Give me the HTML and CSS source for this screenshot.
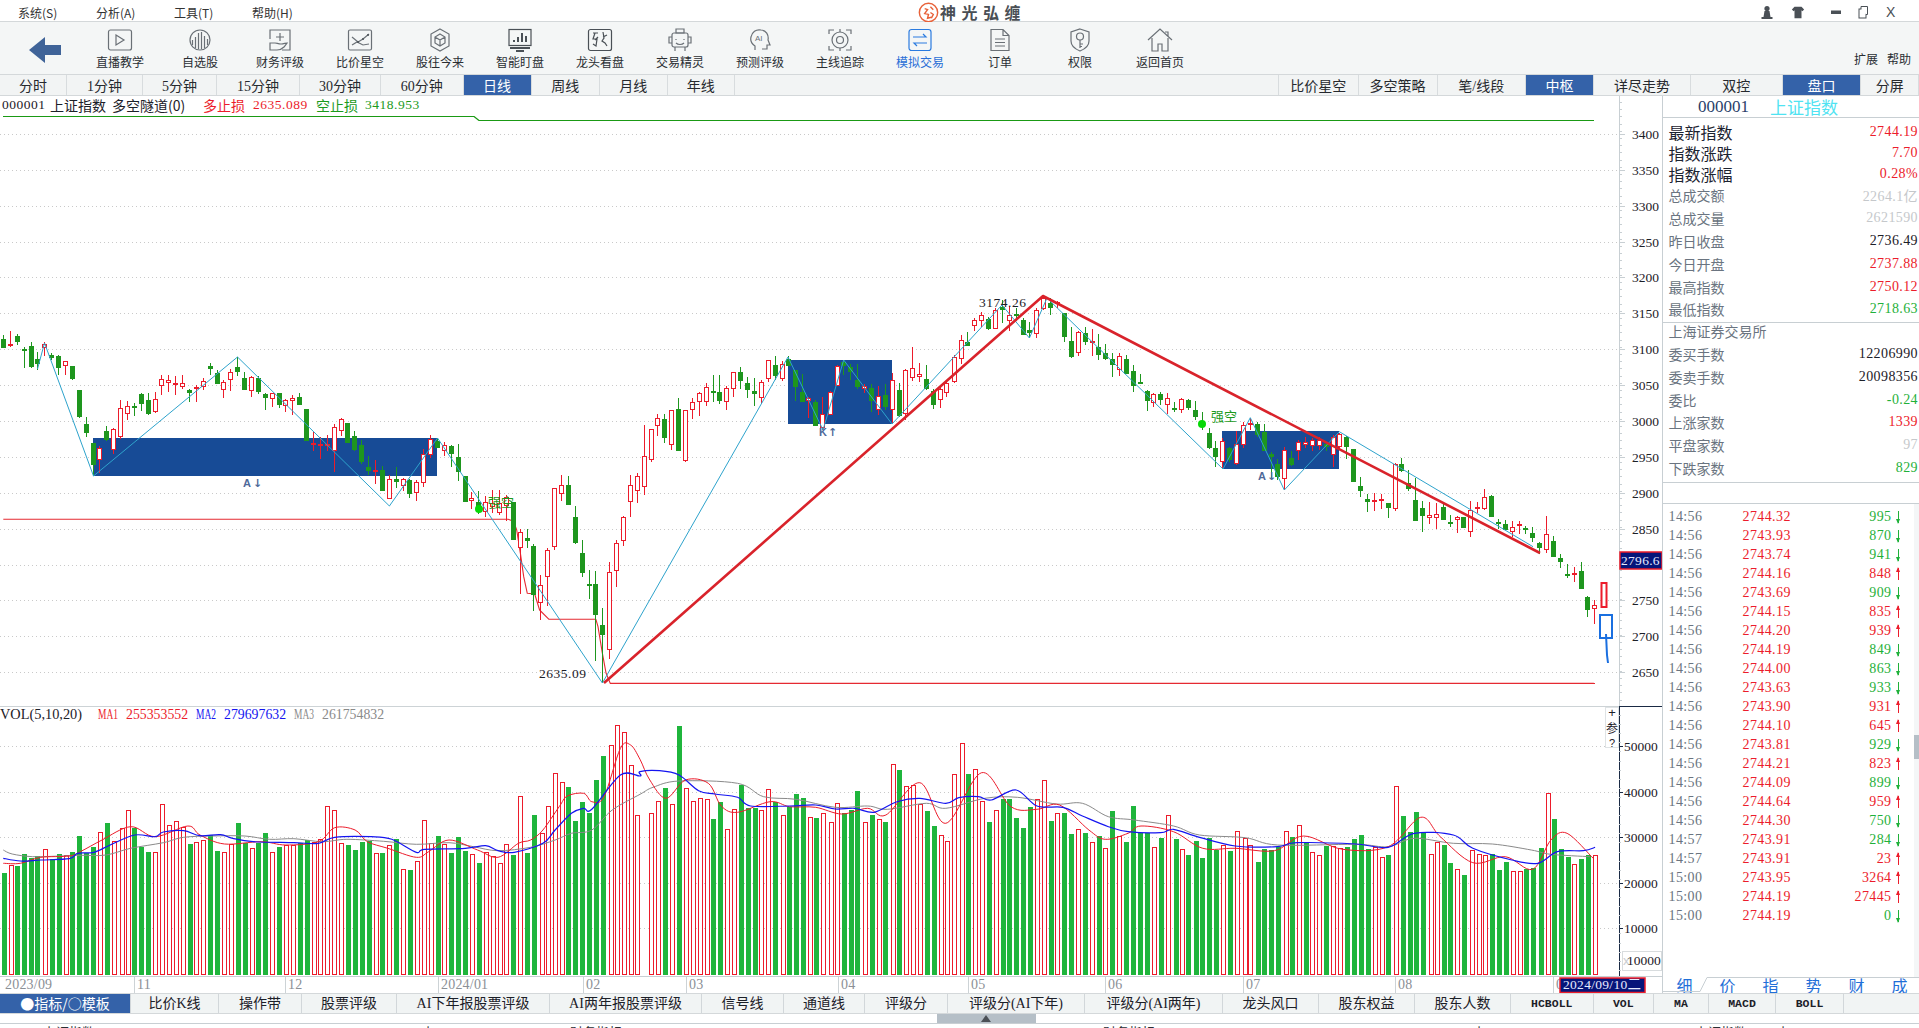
FILE: index.html
```html
<!DOCTYPE html>
<html lang="zh-CN">
<head>
<meta charset="utf-8">
<title>神光弘缠</title>
<link rel="stylesheet" href="styles.css">
</head>
<body>
<div class="app">
  <header class="titlebar">
    <nav class="menu"><span>系统(S)</span><span>分析(A)</span><span>工具(T)</span><span>帮助(H)</span></nav>
    <div class="brand">
      <svg class="logo" viewBox="0 0 22 22"><circle cx="11" cy="11" r="9.6"/><path d="M7 7l3 1-3 4 4 1-1 4 4-1M13 5l3 3M13 11l3 2-2 4"/></svg>
      <span>神光弘缠</span>
    </div>
    <div class="winbtns">
      <svg viewBox="0 0 14 14"><circle cx="7" cy="3.5" r="2.6" class="solid"/><path d="M4.5 6h5l1 6h2v2H1.500v-2h2z" class="solid"/></svg>
      <svg class="after-person" viewBox="0 0 16 14"><path d="M4 1h8l3 3-2 2-1-1v9H4V5L3 6 1 4z" class="solid"/></svg>
      <svg class="after-shirt" viewBox="0 0 14 14"><rect x="2" y="5.500" width="10" height="3.500" class="solid"/></svg>
      <svg class="after-min" viewBox="0 0 14 14"><rect x="3" y="4" width="7" height="9" class="thin"/><path d="M5 4V1.500h6.500v8H10" class="thin"/></svg>
      <span class="close">X</span>
    </div>
  </header>

  <section class="toolbar">
    <svg class="back" viewBox="0 0 32 26"><path d="M0 13 16 0v8h16v10H16v8z"/></svg>
    <ul class="tools">
      <li><svg class="ico" viewBox="0 0 26 24"><rect x="1.500" y="2" width="23" height="20" rx="2"/><path d="M9 7l8 5-8 5z"/></svg><span>直播教学</span></li>
      <li><svg class="ico" viewBox="0 0 26 24"><circle cx="13" cy="12" r="10"/><path d="M5.500 12v5M8.500 9v11M11.500 5v16M14.500 4v17M17.500 8v12M20.500 11v6"/></svg><span>自选股</span></li>
      <li><svg class="ico" viewBox="0 0 26 24"><path d="M3 11V2h20v20h-8M13 5v8M9 9h8"/><path d="M3 15h5c2 0 3 1 6 1s4-1 6-1l-3 4c-2 2-4 3-7 3H3z"/></svg><span>财务评级</span></li>
      <li><svg class="ico" viewBox="0 0 26 24"><rect x="1.500" y="2" width="23" height="20" rx="1.500"/><path d="M5 9l6 5 5-3 6-5M5 17l5-3 6 3 6-1"/><circle cx="11" cy="14" r="1" class="solid"/><circle cx="16" cy="11" r="1" class="solid"/><circle cx="21" cy="7" r="1" class="solid"/></svg><span>比价星空</span></li>
      <li><svg class="ico" viewBox="0 0 26 24"><path d="M13 1l9 5v12l-9 5-9-5V6z"/><path d="M13 6l5 3v6l-5 3-5-3V9zM8 9l5 3 5-3M13 12v6"/></svg><span>股往今来</span></li>
      <li><svg class="ico dark" viewBox="0 0 26 24"><rect x="2" y="1.500" width="22" height="16"/><path d="M7 14v-2M11 14V9M15 14V5M19 14V8M3 20h20M9 23h8" class="w2"/></svg><span>智能盯盘</span></li>
      <li><svg class="ico dark" viewBox="0 0 26 24"><rect x="1.500" y="1.500" width="23" height="21" rx="2"/><path d="M6 5h5M8 5l-2 6h4l-1 7-3-2M11 9l-3 3M16 4l1 6-2 3 3 2 2 3M20 7l-4 2"/></svg><span>龙头看盘</span></li>
      <li><svg class="ico" viewBox="0 0 26 24"><rect x="5" y="5" width="16" height="14" rx="2"/><path d="M9 1h8v4H9zM5 9H2v6h3M21 9h3v6h-3M9 11v1M17 11v1M9 15c2 2 6 2 8 0M8 19v4M18 19v4"/></svg><span>交易精灵</span></li>
      <li><svg class="ico" viewBox="0 0 26 24"><path d="M8 22v-4c-3-2-5-5-4-9 1-5 5-8 10-7 5 0 8 5 7 10l2 5h-3v4h-5"/><text x="8" y="13" class="ai">AI</text></svg><span>预测评级</span></li>
      <li><svg class="ico" viewBox="0 0 26 24"><path d="M2 6V2h5M19 2h5v4M2 18v4h5M19 22h5v-4M13 1v3M13 20v3"/><circle cx="13" cy="12" r="8"/><circle cx="13" cy="12" r="3.500"/></svg><span>主线追踪</span></li>
      <li class="on"><svg class="ico" viewBox="0 0 26 24"><rect x="2" y="1.500" width="22" height="21" rx="2.500"/><path d="M6 9h13l-3-3M20 15H7l3 3"/></svg><span>模拟交易</span></li>
      <li><svg class="ico" viewBox="0 0 26 24"><path d="M4 1.500h12l6 6v15H4zM16 1.500v6h6M8 11h10M8 14.500h10M8 18h10"/></svg><span>订单</span></li>
      <li><svg class="ico" viewBox="0 0 26 24"><path d="M13 1l9 3v9c0 5-4 8-9 10-5-2-9-5-9-10V4z"/><circle cx="13" cy="8.500" r="3.500"/><path d="M13 12v8M13 16h3M13 18.500h2"/></svg><span>权限</span></li>
      <li><svg class="ico" viewBox="0 0 26 24"><path d="M1 12L13 1l12 11M5 10v13h6v-7h4v7h6V10M18 4h3v4"/></svg><span>返回首页</span></li>
    </ul>
    <div class="toolbar-end"><span>扩展</span><span>帮助</span></div>
  </section>

  <section class="periods">
    <span>分时</span><span>1分钟</span><span>5分钟</span><span>15分钟</span><span>30分钟</span><span>60分钟</span><span class="on">日线</span><span>周线</span><span>月线</span><span>年线</span>
    <i></i>
    <span>比价星空</span><span>多空策略</span><span>笔/线段</span><span class="on">中枢</span><span>详尽走势</span><span>双控</span><span class="on">盘口</span><span>分屏</span>
  </section>

  <main class="main">
    <div class="chart-wrap">
      <svg id="chart" class="chart" viewBox="0 96 1662 897" width="1662" height="897">
        <g id="layer-grid"></g>
        <g class="zones">
          <rect x="93" y="438" width="344" height="38"/>
          <rect x="788" y="360" width="104" height="64"/>
          <rect x="1222" y="431" width="117" height="38"/>
        </g>
        <g id="layer-candles"></g>
        <g id="layer-lines"></g>

        <g class="lbl">
          <text x="979" y="307" class="n">3174.26</text>
          <text x="539" y="678" class="n">2635.09</text>
          <text x="1211" y="421" class="grn sm">强空</text>
          <text x="488" y="507" class="grn sm">强空</text>
        </g>
        <g class="mark">
          <text x="243" y="487">A</text><text x="253" y="487" class="dir">↓</text>
          <text x="819" y="436">K</text><text x="828" y="436" class="dir">↑</text>
          <text x="1258" y="480">A</text><text x="1267" y="480" class="dir">↓</text>
        </g>
        <g class="axis">
          <text x="1632" y="139">3400</text><text x="1632" y="175">3350</text><text x="1632" y="211">3300</text><text x="1632" y="247">3250</text>
          <text x="1632" y="282">3200</text><text x="1632" y="318">3150</text><text x="1632" y="354">3100</text><text x="1632" y="390">3050</text>
          <text x="1632" y="426">3000</text><text x="1632" y="462">2950</text><text x="1632" y="498">2900</text><text x="1632" y="534">2850</text>
          <text x="1632" y="605">2750</text><text x="1632" y="641">2700</text><text x="1632" y="677">2650</text>
          <text x="1624" y="751">50000</text><text x="1624" y="797">40000</text><text x="1624" y="842">30000</text><text x="1624" y="888">20000</text><text x="1624" y="933">10000</text>
        </g>
        <rect class="tag" x="1620" y="552" width="42" height="17"/>
        <text class="tagtext" x="1621" y="565">2796.6</text>

        <g class="hdr vol">
          <text x="0" y="719" textLength="82" lengthAdjust="spacingAndGlyphs">VOL(5,10,20)</text>
          <text x="98" y="719" class="red" textLength="20" lengthAdjust="spacingAndGlyphs">MA1</text><text x="126" y="719" class="d red">255353552</text>
          <text x="196" y="719" class="blu" textLength="20" lengthAdjust="spacingAndGlyphs">MA2</text><text x="224" y="719" class="d blu">279697632</text>
          <text x="294" y="719" class="gry" textLength="20" lengthAdjust="spacingAndGlyphs">MA3</text><text x="322" y="719" class="d gry">261754832</text>
        </g>
        <g class="pbtn">
          <rect x="1605.500" y="707.500" width="13" height="40"/>
          <text x="1612" y="717" class="latin">+</text><text x="1612" y="733">参</text><text x="1612" y="747" class="latin sm">?</text>
        </g>
        <rect class="unit" x="1622.500" y="951.500" width="39" height="19"/>
        <text class="unit-x" x="1623" y="965">x</text>
        <text class="axis-t" x="1627" y="965">10000</text>

        <g class="dates">
          <text x="5" y="989">2023/09</text><text x="137" y="989">11</text><text x="288" y="989">12</text><text x="441" y="989">2024/01</text>
          <text x="586" y="989">02</text><text x="689" y="989">03</text><text x="841" y="989">04</text><text x="971" y="989">05</text>
          <text x="1108" y="989">06</text><text x="1246" y="989">07</text><text x="1398" y="989">08</text><text x="1556" y="989">0</text>
        </g>
        <rect class="tag" x="1560" y="978" width="85" height="14.500"/>
        <text class="tagtext" x="1563" y="989">2024/09/10二</text>
      </svg>
      <div class="chart-head">
        <span class="num">000001</span>
        <span>上证指数</span>
        <span>多空隧道(0)</span>
        <span class="red">多止损</span>
        <span class="num red">2635.089</span>
        <span class="dgrn">空止损</span>
        <span class="num dgrn">3418.953</span>
      </div>
    </div>

    <aside class="side">
      <div class="side-head"><span class="code">000001</span><span class="name">上证指数</span></div>
      <div class="quote quote-a">
        <div class="kv big"><b>最新指数</b><em class="red">2744.19</em></div>
        <div class="kv big"><b>指数涨跌</b><em class="red">7.70</em></div>
        <div class="kv big"><b>指数涨幅</b><em class="red">0.28%</em></div>
        <div class="kv"><b>总成交额</b><em class="pale">2264.1亿</em></div>
        <div class="kv"><b>总成交量</b><em class="pale">2621590</em></div>
        <div class="kv"><b>昨日收盘</b><em>2736.49</em></div>
        <div class="kv"><b>今日开盘</b><em class="red">2737.88</em></div>
        <div class="kv"><b>最高指数</b><em class="red">2750.12</em></div>
        <div class="kv"><b>最低指数</b><em class="grn">2718.63</em></div>
      </div>
      <div class="quote quote-b">
        <div class="kv"><b>上海证券交易所</b></div>
        <div class="kv"><b>委买手数</b><em>12206990</em></div>
        <div class="kv"><b>委卖手数</b><em>20098356</em></div>
        <div class="kv"><b>委比</b><em class="grn">-0.24</em></div>
        <div class="kv"><b>上涨家数</b><em class="red">1339</em></div>
        <div class="kv"><b>平盘家数</b><em class="pale">97</em></div>
        <div class="kv"><b>下跌家数</b><em class="grn">829</em></div>
      </div>
      <div class="side-gap"></div>
      <div class="ticks">
        <div class="tick"><span>14:56</span><span class="red">2744.32</span><span class="grn">995</span><i class="arr dn"></i></div>
        <div class="tick"><span>14:56</span><span class="red">2743.93</span><span class="grn">870</span><i class="arr dn"></i></div>
        <div class="tick"><span>14:56</span><span class="red">2743.74</span><span class="grn">941</span><i class="arr dn"></i></div>
        <div class="tick"><span>14:56</span><span class="red">2744.16</span><span class="red">848</span><i class="arr up"></i></div>
        <div class="tick"><span>14:56</span><span class="red">2743.69</span><span class="grn">909</span><i class="arr dn"></i></div>
        <div class="tick"><span>14:56</span><span class="red">2744.15</span><span class="red">835</span><i class="arr up"></i></div>
        <div class="tick"><span>14:56</span><span class="red">2744.20</span><span class="red">939</span><i class="arr up"></i></div>
        <div class="tick"><span>14:56</span><span class="red">2744.19</span><span class="grn">849</span><i class="arr dn"></i></div>
        <div class="tick"><span>14:56</span><span class="red">2744.00</span><span class="grn">863</span><i class="arr dn"></i></div>
        <div class="tick"><span>14:56</span><span class="red">2743.63</span><span class="grn">933</span><i class="arr dn"></i></div>
        <div class="tick"><span>14:56</span><span class="red">2743.90</span><span class="red">931</span><i class="arr up"></i></div>
        <div class="tick"><span>14:56</span><span class="red">2744.10</span><span class="red">645</span><i class="arr up"></i></div>
        <div class="tick"><span>14:56</span><span class="red">2743.81</span><span class="grn">929</span><i class="arr dn"></i></div>
        <div class="tick"><span>14:56</span><span class="red">2744.21</span><span class="red">823</span><i class="arr up"></i></div>
        <div class="tick"><span>14:56</span><span class="red">2744.09</span><span class="grn">899</span><i class="arr dn"></i></div>
        <div class="tick"><span>14:56</span><span class="red">2744.64</span><span class="red">959</span><i class="arr up"></i></div>
        <div class="tick"><span>14:56</span><span class="red">2744.30</span><span class="grn">750</span><i class="arr dn"></i></div>
        <div class="tick"><span>14:57</span><span class="red">2743.91</span><span class="grn">284</span><i class="arr dn"></i></div>
        <div class="tick"><span>14:57</span><span class="red">2743.91</span><span class="red">23</span><i class="arr up"></i></div>
        <div class="tick"><span>15:00</span><span class="red">2743.95</span><span class="red">3264</span><i class="arr up"></i></div>
        <div class="tick"><span>15:00</span><span class="red">2744.19</span><span class="red">27445</span><i class="arr up"></i></div>
        <div class="tick"><span>15:00</span><span class="red">2744.19</span><span class="grn">0</span><i class="arr dn"></i></div>
        <div class="vscroll"><i></i></div>
      </div>
      <div class="minitabs">
        <svg class="minitabs-line" viewBox="0 0 257 16"><path d="M0 14.500h37l7-14h213"/></svg>
        <span>细</span><span>价</span><span>指</span><span>势</span><span>财</span><span>成</span>
      </div>
    </aside>
  </main>

  <section class="subtabs">
    <span class="on cjk">●指标/○模板</span><span>比价K线</span><span>操作带</span><span>股票评级</span><span>AI下年报股票评级</span><span>AI两年报股票评级</span><span>信号线</span><span>通道线</span><span>评级分</span><span>评级分(AI下年)</span><span>评级分(AI两年)</span><span>龙头风口</span><span>股东权益</span><span>股东人数</span><span class="mono">HCBOLL</span><span class="mono">VOL</span><span class="mono">MA</span><span class="mono">MACD</span><span class="mono">BOLL</span><i></i>
  </section>
  <div class="hscroll"><div class="hthumb"><i></i></div></div>
  <div class="cutoff"><span>上证指数</span><span>上</span><span>财务指标</span><span>财务指标</span><span>上</span><span>上证指数</span><span>上</span></div>
</div>
<script src="chart.js"></script>
</body>
</html>
```
FILE: styles.css
```css
* { box-sizing: border-box; }
html, body { margin: 0; padding: 0; }
body {
  width: 1919px; height: 1028px; overflow: hidden; background: #fff; color: #1c2028;
  font-family: "Liberation Serif", "Noto Sans CJK SC", serif; font-size: 13px;
}
.app { display: flex; flex-direction: column; height: 1028px; }
.red { color: #ec1c2b; fill: #ec1c2b; }
.grn { color: #1fb13a; fill: #1c9a1c; }
.dgrn { color: #1c9a1c; }
.blu { fill: #1414f0; }
.gry { fill: #8a8a8a; }
.pale { color: #c5c8cb; }

/* title bar */
.titlebar { height: 22px; flex: none; display: grid; grid-template-columns: 1fr auto 1fr; align-items: center; border-bottom: 1px solid #d4d8da; }
.menu { display: flex; padding-left: 18px; gap: 39px; font-family: "Noto Sans CJK SC", sans-serif; font-size: 12px; color: #333; }
.menu span { width: 39px; white-space: nowrap; }
.brand { display: flex; align-items: center; gap: 1px; padding-left: 25px; font-family: "Noto Sans CJK SC", sans-serif; font-size: 16px; font-weight: 700; color: #4a4f55; letter-spacing: 5.500px; }
.logo { width: 21px; height: 21px; fill: none; stroke: #e8623a; stroke-width: 1.500; }
.winbtns { display: flex; justify-content: flex-end; align-items: center; padding-right: 23px; color: #4a4f55; }
.winbtns svg { width: 14px; height: 14px; }
.winbtns .after-person { margin-left: 17px; }
.winbtns .after-shirt { margin-left: 24px; }
.winbtns .after-min { margin-left: 13px; }
.solid { fill: #4a5056; stroke: none; }
.thin { fill: #fff; stroke: #4a5056; stroke-width: 1; }
.close { font-family: "Liberation Sans", sans-serif; font-size: 14px; width: 10px; margin-left: 16px; }

/* toolbar */
.toolbar { height: 53px; flex: none; display: flex; background: #f4f6f6; border-bottom: 1px solid #d4d8da; position: relative; }
.back { position: absolute; left: 29px; top: 15px; width: 32px; height: 26px; fill: #3f6398; }
.tools { list-style: none; margin: 0; padding: 0 0 0 80px; display: flex; }
.tools li { width: 80px; display: flex; flex-direction: column; align-items: center; padding-top: 6px; font-family: "Noto Sans CJK SC", sans-serif; font-size: 12px; color: #2a2e33; line-height: 16px; }
.tools li span { margin-top: 2px; }
.ico { width: 26px; height: 24px; fill: none; stroke: #6a7076; stroke-width: 1.200; }
.ico.dark { stroke: #4a5056; }
.ico .w2 { stroke-width: 2; }
.ico .ai { font-family: "Liberation Sans", sans-serif; font-size: 8px; fill: #6a7076; stroke: none; }
.tools li.on { color: #2a6fd6; }
.tools li.on .ico { stroke: #2a7be0; }
.toolbar-end { position: absolute; right: 8px; bottom: 7px; display: flex; gap: 9px; font-family: "Noto Sans CJK SC", sans-serif; font-size: 12px; line-height: 16px; color: #2a2e33; }

/* period tabs */
.periods { height: 21px; flex: none; display: grid; grid-template-columns: 67px 76px 74px 83px 81px 82.500px 68px 68.500px 67.500px 67.500px 544px 79.500px 79px 88.500px 68px 97px 91.600px 78.900px 57.500px; background: #f2f4f4; border-bottom: 1px solid #d4d8da; font-family: "Liberation Serif", "Noto Sans CJK SC", sans-serif; font-size: 14px; color: #26292e; }
.periods span { display: flex; align-items: center; justify-content: center; border-right: 1px solid #d8dcde; white-space: nowrap; }
.periods i:first-of-type { border-right: 1px solid #d8dcde; }
.periods .on { background: #3462a9; color: #fff; }

/* chart and side panel */
.main { height: 897px; flex: none; display: flex; }
.chart-wrap { position: relative; width: 1662px; flex: none; }
.chart { display: block; overflow: hidden; }
.chart-head { position: absolute; left: 2px; top: 0; display: grid; grid-template-columns: 48px 62px 91px 50px 63px 49px auto; height: 18px; font-family: "Noto Sans CJK SC", sans-serif; font-size: 14px; line-height: 18px; color: #1c2028; white-space: nowrap; }
.chart-head .num { font-family: "Liberation Serif", serif; font-size: 13.500px; letter-spacing: .5px; }
.zones rect { fill: #174b96; }
.lbl text { font-family: "Noto Sans CJK SC", sans-serif; font-size: 14px; fill: #1c2028; }
.lbl text.grn { fill: #1c9a1c; }
.chart text.n { font-family: "Liberation Serif", serif; font-size: 13.500px; letter-spacing: .5px; }
.lbl text.sm { font-size: 13px; }
.hdr text { font-family: "Liberation Serif", serif; font-size: 13.800px; fill: #1c2028; }
.hdr text.red { fill: #ec1c2b; }
.hdr text.blu { fill: #1414f0; }
.hdr text.gry { fill: #8a8a8a; }
.mark text { font-family: "Liberation Sans", sans-serif; font-size: 11px; font-weight: 700; fill: #4f6a9a; }
.mark text.dir { font-family: "DejaVu Sans", sans-serif; font-size: 11px; }
.axis text, .axis-t { font-family: "Liberation Serif", serif; font-size: 13.500px; fill: #1c2028; }
.tag { fill: #06157a; stroke: #ec1c2b; stroke-width: 1.500; }
.tagtext { font-family: "Liberation Serif", "Noto Sans CJK SC", serif; font-size: 13.500px; fill: #e6eaff; letter-spacing: .3px; }
.pbtn rect { fill: #fff; stroke: #dfe3e5; }
.pbtn text { font-family: "Noto Sans CJK SC", sans-serif; font-size: 12px; text-anchor: middle; fill: #1c2028; }
.pbtn text.latin { font-family: "Liberation Sans", sans-serif; font-size: 13px; }
.pbtn text.latin.sm { font-size: 11px; }
.unit { fill: #fff; stroke: #d8dcde; }
.unit-x { font-family: "Liberation Sans", sans-serif; font-size: 13px; fill: #c8ccd0; }
.dates text { font-family: "Liberation Serif", serif; font-size: 14px; fill: #8b9096; letter-spacing: .2px; }

.side { width: 257px; flex: none; display: flex; flex-direction: column; border-left: 1px solid #c8cfd3; }
.side-head { height: 22px; flex: none; display: flex; align-items: center; padding-left: 35px; border-bottom: 1px solid #c8cfd3; }
.code { font-size: 17px; color: #2a3f6a; font-family: "Liberation Serif", serif; }
.name { margin-left: 21px; font-family: "Noto Sans CJK SC", sans-serif; font-size: 17px; color: #4fe3f2; line-height: 20px; }
.quote { flex: none; border-bottom: 1px solid #c8cfd3; }
.quote-a { padding: 3px 0 1px; }
.quote-b { margin-top: -3px; padding-bottom: 3px; border-top: 0; position: relative; }
.kv { height: 22.800px; display: flex; justify-content: space-between; align-items: center; padding: 0 1px 0 5.500px; }
.kv b { font: 400 14px "Noto Sans CJK SC", sans-serif; color: #6a7480; }
.kv em { font: 400 14px "Liberation Serif", "Noto Sans CJK SC", serif; letter-spacing: .4px; }
.kv.big { height: 21px; }
.kv.big b { font-size: 16px; color: #1c2330; }
.side-gap { height: 21px; flex: none; border-bottom: 1px solid #c8cfd3; }
.ticks { flex: 1; padding-top: 3px; position: relative; }
.tick { height: 19px; display: grid; grid-template-columns: 74px 70px 79px 14px; padding-left: 5.500px; align-items: center; font-size: 14px; letter-spacing: .4px; line-height: 19px; }
.tick span:first-child { color: #6a7480; }
.tick span:nth-child(3) { text-align: right; }
.arr { position: relative; height: 14px; display: block; }
.arr::before { content: ""; position: absolute; left: 6px; top: 1px; bottom: 1px; width: 1.500px; background: currentColor; }
.arr::after { content: ""; position: absolute; left: 4.250px; border-left: 2.500px solid transparent; border-right: 2.500px solid transparent; }
.arr.up { color: #ec1c2b; }
.arr.up::after { top: 0; border-bottom: 5px solid currentColor; }
.arr.dn { color: #1fb13a; }
.arr.dn::after { bottom: 0; border-top: 5px solid currentColor; }
.vscroll { position: absolute; right: 0; top: 0; bottom: 0; width: 5px; background: #f4f6f7; }
.vscroll i { position: absolute; left: 0; right: 0; top: 231px; height: 24px; background: #b5bfc7; }
.minitabs { height: 16px; flex: none; position: relative; display: grid; grid-template-columns: repeat(6, 43px); font-family: "Noto Sans CJK SC", sans-serif; font-size: 16px; line-height: 17px; color: #1f6fd8; text-align: center; }
.minitabs-line { position: absolute; inset: 0; width: 257px; height: 16px; fill: none; stroke: #c8cfd3; }

/* bottom */
.subtabs { height: 21px; flex: none; position: relative; display: grid; grid-template-columns: 131px 88px 83px 95px 153px 152px 82px 81px 83px 137px 138px 96px 96px 96px 82.500px 60.500px 55px 67px 68px 75px; background: #f1f4f4; border-top: 1px solid #d4d8da; border-bottom: 1px solid #d4d8da; font-family: "Liberation Serif", "Noto Sans CJK SC", serif; font-size: 14px; line-height: 19px; text-align: center; color: #1c2028; }
.subtabs span { border-right: 1px solid #d2d7da; white-space: nowrap; }
.subtabs .on { background: #3462a9; color: #fff; }
.subtabs .cjk { font-family: "Noto Sans CJK SC", sans-serif; }
.subtabs .mono { font-family: "Liberation Mono", monospace; font-size: 11.500px; font-weight: 700; }
.hscroll { height: 9px; flex: none; background: #fff; position: relative; }
.hthumb { position: absolute; left: 937px; width: 99px; top: 0; bottom: 0; background: #b5bfc7; }
.hthumb i { position: absolute; left: 44px; top: 1px; border-left: 5px solid transparent; border-right: 5px solid transparent; border-bottom: 7px solid #4a5056; }
.cutoff { flex: 1; border-top: 1px solid #c8cfd3; overflow: hidden; display: grid; grid-template-columns: 43px 379px 148px 533px 370px 222px 82px 142px; font-family: "Noto Sans CJK SC", sans-serif; font-size: 13px; line-height: 13px; padding-top: 1px; color: #2a2e33; }
.cutoff span { grid-row: 1; white-space: nowrap; }
.cutoff span:nth-child(1) { grid-column: 2; }
.cutoff span:nth-child(2) { grid-column: 3; }
.cutoff span:nth-child(3) { grid-column: 4; }
.cutoff span:nth-child(4) { grid-column: 5; }
.cutoff span:nth-child(5) { grid-column: 6; }
.cutoff span:nth-child(6) { grid-column: 7; }
.cutoff span:nth-child(7) { grid-column: 8; }
```
FILE: chart.js
```js
(function () {
  var NS = 'http://www.w3.org/2000/svg';
  var RED = '#ec1c2b', CGRN = '#1e961e', VGRN = '#1fb53c', GRID = '#c9c9c9', AXIS = '#c8cfd3', DARK = '#1a2a44';
  var gridLayer = document.getElementById('layer-grid');
  var candleLayer = document.getElementById('layer-candles');
  var lineLayer = document.getElementById('layer-lines');

  function el(parent, name, attrs) {
    var n = document.createElementNS(NS, name);
    for (var k in attrs) n.setAttribute(k, attrs[k]);
    parent.appendChild(n);
    return n;
  }
  function hline(p, x1, x2, y, color, extra) {
    var a = { x1: x1, x2: x2, y1: y + 0.5, y2: y + 0.5, stroke: color };
    for (var k in extra) a[k] = extra[k];
    return el(p, 'line', a);
  }
  function vline(p, x, y1, y2, color) {
    return el(p, 'line', { x1: x + 0.5, x2: x + 0.5, y1: y1, y2: y2, stroke: color });
  }
  function poly(p, pts, color, width) {
    return el(p, 'polyline', { points: pts, fill: 'none', stroke: color, 'stroke-width': width, 'stroke-linejoin': 'round' });
  }
  function fromCrop(ox, sx, oy, list) {
    return list.map(function (q) { return [ox + q[0] / sx, oy + q[1] / 3]; });
  }
  function str(pts) { return pts.map(function (q) { return q[0].toFixed(1) + ',' + q[1].toFixed(1); }).join(' '); }
  /* Catmull-Rom curve through the points, as the moving averages are drawn */
  function smooth(pts) {
    var d = 'M' + pts[0][0].toFixed(1) + ' ' + pts[0][1].toFixed(1);
    for (var i = 0; i < pts.length - 1; i++) {
      var a = pts[Math.max(i - 1, 0)], b = pts[i], c = pts[i + 1], e = pts[Math.min(i + 2, pts.length - 1)];
      d += 'C' + (b[0] + (c[0] - a[0]) / 6).toFixed(1) + ' ' + (b[1] + (c[1] - a[1]) / 6).toFixed(1) + ' ' +
        (c[0] - (e[0] - b[0]) / 6).toFixed(1) + ' ' + (c[1] - (e[1] - b[1]) / 6).toFixed(1) + ' ' +
        c[0].toFixed(1) + ' ' + c[1].toFixed(1);
    }
    return d;
  }

  /* ---------- grid and axes ---------- */
  var priceY = [134, 170, 206, 242, 277, 313, 349, 385, 421, 457, 493, 529, 565, 600, 636, 672];
  priceY.forEach(function (y) {
    hline(gridLayer, 0, 1619, y, GRID, { 'stroke-dasharray': '1 3' });
    hline(gridLayer, 1619, 1625, y, AXIS);
  });
  for (var ty = 102; ty < 704; ty += 7.2) hline(gridLayer, 1619, 1622, Math.round(ty), AXIS);
  vline(gridLayer, 1619, 96, 706, AXIS);
  hline(gridLayer, 0, 1619, 706, '#cdd3d6');
  hline(gridLayer, 1619, 1662, 706, DARK);
  vline(gridLayer, 1619, 706, 977, DARK);
  [746, 792, 837, 883, 928].forEach(function (y) {
    hline(gridLayer, 0, 1619, y, GRID, { 'stroke-dasharray': '1 3' });
    hline(gridLayer, 1619, 1623, y, DARK);
  });
  for (var vy = 715; vy < 975; vy += 9.1) hline(gridLayer, 1619, 1621, Math.round(vy), AXIS);
  hline(gridLayer, 0, 1662, 976, '#c8cfd3');
  [134, 285, 438, 583, 686, 838, 968, 1105, 1243, 1395, 1553].forEach(function (x) { vline(gridLayer, x, 977, 993, '#cdd3d6'); });

  /* top boundary line of the channel */
  poly(gridLayer, '3,116.500 474,116.500 479,120.500 1594,120.500', '#1a9a14', 1.200);
  /* stop lines */
  poly(gridLayer, str(fromCrop(0, 2.45, 320, [[8, 598], [1245, 598], [1258, 604], [1266, 630], [1275, 700], [1283, 770], [1292, 820], [1310, 822], [1322, 870], [1345, 898], [1460, 898], [1465, 920], [1476, 1000], [1485, 1060], [1495, 1090], [3905, 1090]])), '#e52a32', 1.100);

  /* ---------- candles: x colour top bottom high low, read per chart section ---------- */
  var candleSections = [
    { ox: 0, sx: 2.45, oy: 320, rows: '8g57,84,45,84 25r72,78,33,82 42g47,65,42,75 59g88,92,82,145 77g78,141,66,145 92g117,132,96,150 109r73,84,66,108 126g106,115,100,120 143g108,143,105,165 160r124,137,124,165 177g138,177,138,180 195g210,291,210,294 212g312,339,291,351 229g369,435,369,468 243r384,421,378,460 261g333,360,318,362 278r327,389,323,402 295r265,351,240,358 312r259,282,243,300 329g258,262,250,288 347g222,252,218,273 364g240,282,218,284 381r238,276,216,279 395r178,199,165,225 412r181,188,165,217 430r189,191,168,225 447r190,201,165,207 464g210,219,207,246 481r202,205,195,246 498r184,201,175,210 516g138,147,129,165 533g159,192,150,193 547r186,209,180,234 565r156,179,147,213 582g141,156,111,168 599g174,210,156,210 616r171,213,168,231 633g174,216,168,222 650g222,234,219,270 667r220,238,219,261 685g220,255,219,264 699r241,258,237,276 716r235,243,225,285 733g231,255,219,255 750g267,362,267,363 767r370,375,336,393 785r373,376,350,417 802r371,375,345,393 819r322,394,312,456 836r297,333,294,348 851g309,369,309,369 868g348,390,333,393 885g375,426,361,432 903g441,453,408,465 920r450,455,420,492 937g450,513,438,513 954r478,537,465,537 971g477,486,441,504 988r478,497,474,513 1003g480,522,477,534 1020r487,518,480,543 1037r403,489,387,501 1055r358,406,345,414 1072g363,384,354,384 1089r376,394,366,408 1106g378,402,375,441 1123g411,456,372,483 1140g468,546,468,546 1155r535,543,516,567 1172g546,576,513,582 1189r546,576,528,590 1206r549,560,510,580 1223r550,578,510,585 1240r531,557,525,603 1258g546,660,546,660 1275r637,683,628,822 1292g654,663,627,684 1307g678,826,672,873 1324r796,849,765,900 1341r690,771,684,858 1358r504,681,504,690 1375r495,521,465,543 1392g495,555,468,555 1409g591,669,558,672 1427g699,759,660,771 1444g792,797,750,837 1459g792,885,753,1023 1476g915,945,864,1090 1493r756,990,726,1017 1510r670,753,660,801 1527r591,663,588,678 1544r496,546,465,591 1562r468,513,459,549' },
    { ox: 600, sx: 2.45, oy: 280, rows: '109r528,622,435,645 126r448,540,448,545 141r415,437,402,468 158g417,473,402,490 175r391,494,391,510 192g387,513,354,513 209r391,543,391,545 226r367,391,354,417 243r340,365,336,408 261r322,365,308,378 278g333,336,285,366 293g336,363,285,372 310r325,365,318,390 327r277,328,275,351 344g277,302,262,327 361g309,330,292,354 378g333,342,294,378 395r307,353,300,372 412r241,298,240,306 429g255,288,228,300 446r253,296,243,303 461g237,258,228,258 478g270,321,270,363 495g336,366,282,366 512r355,363,350,414 529g366,438,360,438 546r402,444,351,450 565r335,405,333,405 582r257,317,254,318 597g245,258,240,285 613g262,275,252,300 631g300,321,252,327 647r319,326,312,340 664g324,364,312,396 682r349,391,318,405 699g345,381,312,391 716r301,391,280,432 733g330,409,309,411 748r271,403,268,420 765r265,294,201,303 782r283,292,249,306 799g297,327,255,330 816g333,375,327,387 833r327,360,318,385 850r310,340,306,351 868r232,305,225,309 885r181,236,165,252 900g186,197,156,197 917r120,137,114,153 934r106,122,96,141 951g117,147,111,150 969r91,146,84,147 986g81,90,60,129 1003r106,122,78,153 1020g102,108,84,123 1037g120,165,114,165 1052g150,159,126,174 1069r91,161,84,174 1086r54,87,45,90 1103g69,84,54,105 1120r67,72,63,84 1137g99,171,99,186 1155g183,231,141,234 1172r157,218,153,228 1189g159,186,141,195 1206r184,189,148,228 1221g201,225,162,240 1238g219,237,192,240 1255g237,255,219,291 1272r229,269,219,288 1289g237,282,225,282 1306g273,318,255,336 1324g306,312,282,312 1341g333,363,330,393 1356r343,369,340,381 1373g342,360,336,375 1390r355,376,340,402 1407g384,390,366,396 1424r357,390,354,399 1441g360,385,357,390 1458g390,411,363,420' },
    { ox: 1180, sx: 3, oy: 380, rows: '66g126,136,96,150 88g159,205,144,208 106g205,231,183,260 127r184,245,174,264 148g205,240,200,245 169r193,251,153,255 190r136,196,126,205 211r130,136,114,150 232g133,165,126,170 253g156,213,132,213 274g223,232,216,297 292g253,291,237,300 313r211,296,202,330 334g235,256,213,258 355r187,214,180,240 376r187,195,171,204 397r181,199,174,213 418r180,199,172,210 439g192,202,185,213 460r172,226,165,262 478r163,200,158,205 499g171,201,168,237 520g207,306,207,306 541g318,333,291,351 562g357,366,342,396 583r359,367,339,393 604r356,360,342,387 625g369,384,369,414 646r253,386,250,393 665g252,273,234,276 686g309,327,270,333 707g360,423,294,423 728g384,408,363,456 748r404,415,366,432 769r403,413,369,447 790g381,420,366,420 811g426,430,405,441 832r410,421,408,459 850g411,444,411,444 871r389,457,363,471 892r382,386,366,399 913r352,386,327,390 934g348,411,345,411 955g426,431,417,447 976g433,450,420,450 997r440,456,423,471 1018r432,436,423,462 1037g444,450,438,462 1057g460,474,441,486 1078g489,504,486,522 1099r463,510,408,519 1120g483,531,468,531 1141g534,546,522,564 1162g582,588,552,594 1183r579,584,561,606 1204g573,627,546,627 1222g651,690,648,711 1243r676,686,660,732' }
  ];
  candleSections.forEach(function (sec) {
    sec.rows.split(' ').forEach(function (row) {
      var m = row.match(/^(\d+)([rg])(\d+),(\d+),(\d+),(\d+)$/);
      var cx = Math.round(sec.ox + (+m[1]) / sec.sx - 0.5);
      var t = Math.round(sec.oy + (+m[3]) / 3), b = Math.round(sec.oy + (+m[4]) / 3);
      var h = Math.round(sec.oy + (+m[5]) / 3), l = Math.round(sec.oy + (+m[6]) / 3);
      var up = m[2] === 'r', col = up ? RED : CGRN;
      if (b - t < 2) b = t + 2;
      vline(candleLayer, cx, h, l, col);
      if (up && b - t >= 3) {
        el(candleLayer, 'rect', { x: cx - 1.5, y: t + 0.5, width: 4, height: b - t - 1, fill: '#fff', stroke: col });
      } else {
        el(candleLayer, 'rect', { x: cx - 2, y: t, width: 5, height: b - t, fill: col });
      }
    });
  });
  /* forecast boxes at the right */
  el(candleLayer, 'rect', { x: 1601.5, y: 583, width: 5, height: 24, fill: '#fff', stroke: RED, 'stroke-width': 2 });
  el(candleLayer, 'rect', { x: 1600, y: 615, width: 12, height: 23, fill: '#fff', stroke: '#1a6fe0', 'stroke-width': 2 });
  poly(candleLayer, '1606,634 1607,655 1608,663', '#1a6fe0', 2);
  /* signal dots */
  el(candleLayer, 'circle', { cx: 479, cy: 509, r: 4, fill: '#06d806' });
  el(candleLayer, 'circle', { cx: 1202, cy: 424, r: 4, fill: '#06d806' });

  /* ---------- strokes over the candles ---------- */
  poly(lineLayer, '37.500,369 44.500,343 93.500,476 237.500,357 389.400,506 437.500,438 602.400,683 788,357 823,430 843.700,360 892,424 1002,305 1029.400,338 1047,298 1223,469 1250.300,417.700 1284.300,490 1339.300,431.700 1533,546.700', '#2ea3cc', 1);
  poly(lineLayer, '604,683 1043,296 1540,553', '#d9232b', 2.600);
  hline(lineLayer, 610, 1595, 683, '#e52a32');

  /* ---------- volume ---------- */
  var volSections = [
    { ox: 0, sx: 2.45, rows: '11g519 27r496 43g498 59g462 76g474 93g468 112r448 128g476 146g462 163r465 178g456 195g408 212g460 229g442 247r397 263g369 281r424 299r385 316r331 330g384 347g440 364g456 382r456 399r313 416r376 433r364 450r380 467g432 482r427 499r421 516g405 533g453 551r457 568r432 584g369 601g428 619r444 633g429 650g399 668r457 685g441 702r434 720r435 736g428 753g420 771r427 786r418 803r319 820r331 837r430 854g435 871g450 888g426 905g424 923r460 937g459 955r436 971g417 989r508 1006g510 1024r484 1041r361 1058r428 1074g408 1090r432 1106g459 1123g411 1140g453 1158r463 1175g489 1193r457 1210r467 1227r490 1242r433 1258g465 1276r289 1292g459 1309g345 1328r400 1345r319 1362r220 1379r247 1392g261 1409g363 1427g306 1444g339 1461g240 1478g168 1497r135 1514r76 1531r97 1546r196 1563r346' },
    { ox: 640, sx: 1.537, rows: '18r340 29r304 39g263 50r313 61g78 72r265 82r304 93r295 103r298 113g357 124g306 135r388 146r328 156g255 166g323 177g323 187r330 198r268 208g306 220r346 230g322 240g282 251g294 262r352 272g354 282r340 294r367 304r310 315g340 325g330 335g273 347r367 358g345 368r358 378g366 389r193 399g210 410r259 421r255 431r312 442g333 452g378 463r406 473r424 484r223 495r130 505g222 516r208 527r304 537g366 548r331 558g296 568g298 579g354 589g384 600g321 611r298 622r241 632g363 642r340 652g339 663g402 674r388 684g399 696r427 706g408 716r444 727g333 737r408 747g427 758g318 769g398 780g400 791r442 802g414 813r346 824g417 834r448 843g465 855g422 865g474 876g414 886g450 897r435 908g453 919r394 930r414 939r435 950g486 960g447 971g450 982g442 993r394 1003g411 1014r376 1024g430 1034r457 1045r466 1055g438 1066r438 1077r444 1088g440 1098g417 1109g405 1120g447 1130r442 1141r472 1151g465 1163r259 1173g348 1184g396 1194g336 1205g400 1216r463 1226r427 1236g435 1246g489 1257r508 1268g525 1279r451 1290r463 1300r466 1311g463 1321g510 1332g486 1342r514 1353r514 1363g507 1374g504 1385g444 1396r280 1406g357 1416g447 1427g471 1437r493 1447g477 1458g465 1469r466' }
  ];
  var BASE = 974;
  volSections.forEach(function (sec) {
    sec.rows.split(' ').forEach(function (row) {
      var m = row.match(/^(\d+)([rg])(\d+)$/);
      var left = Math.round(sec.ox + (+m[1]) / sec.sx - 2.5);
      var top = Math.round(700 + (+m[3]) / 3);
      if (m[2] === 'r') {
        el(candleLayer, 'rect', { x: left + 0.5, y: top + 0.5, width: 4, height: BASE - top, fill: '#fff', stroke: RED });
      } else {
        el(candleLayer, 'rect', { x: left, y: top, width: 5, height: BASE - top + 1, fill: VGRN });
      }
    });
  });

  function ma(a, b, color, w) {
    var pts = fromCrop(0, 2.45, 700, a).concat(fromCrop(640, 1.537, 700, b));
    el(lineLayer, 'path', { d: smooth(pts), fill: 'none', stroke: color, 'stroke-width': w });
  }
  ma([[8,450],[30,462],[80,470],[150,468],[200,466],[260,465],[320,445],[400,428],[450,412],[520,408],[600,408],[660,418],[720,416],[790,425],[850,418],[940,424],[1020,433],[1100,428],[1160,440],[1220,452],[1300,442],[1360,420],[1400,400],[1450,390],[1500,330],[1568,283]],
     [[20,262],[60,243],[150,250],[190,290],[240,298],[300,322],[350,318],[380,328],[440,310],[470,325],[530,295],[580,292],[640,312],[680,310],[720,350],[760,360],[820,378],[860,405],[930,413],[980,435],[1100,433],[1150,440],[1190,415],[1250,430],[1310,432],[1370,450],[1400,463],[1460,470]], '#8a8a8a', 1);
  ma([[8,490],[50,490],[100,472],[170,468],[200,453],[250,420],[320,380],[380,410],[460,378],[490,405],[550,432],[640,425],[700,435],[780,425],[820,383],[870,390],[900,425],[950,445],[1020,472],[1050,455],[1100,420],[1170,450],[1220,472],[1270,430],[1300,420],[1330,390],[1370,320],[1390,288],[1430,280],[1450,305],[1480,290],[1520,145],[1545,135],[1568,178]],
     [[15,240],[40,295],[70,240],[105,250],[125,318],[150,337],[200,305],[230,320],[270,322],[310,342],[350,325],[378,345],[430,248],[470,370],[525,218],[570,320],[610,328],[645,315],[690,390],[715,418],[750,400],[770,378],[820,395],[865,445],[915,445],[975,452],[1020,408],[1080,448],[1150,440],[1200,352],[1230,410],[1280,488],[1330,470],[1372,508],[1400,420],[1425,400],[1465,475]], '#ec1c2b', 1);
  ma([[8,475],[50,483],[100,480],[170,476],[190,460],[230,457],[270,435],[330,405],[380,410],[400,396],[450,392],[490,407],[540,404],[570,415],[620,425],[720,428],[780,430],[820,412],[910,410],[960,418],[1020,457],[1040,448],[1140,445],[1190,437],[1220,452],[1260,457],[1330,430],[1360,390],[1400,340],[1430,325],[1450,328],[1520,225],[1568,228]],
     [[0,215],[30,212],[60,225],[90,272],[115,282],[150,292],[170,318],[230,318],[270,315],[300,327],[330,325],[360,337],[395,305],[430,295],[470,310],[490,293],[520,290],[540,300],[578,270],[610,318],[650,322],[680,348],[720,380],[750,395],[800,398],[820,388],[860,412],[915,438],[980,440],[1010,428],[1100,432],[1150,442],[1190,400],[1250,405],[1280,445],[1340,480],[1380,490],[1410,455],[1450,452],[1468,442]], '#1414f0', 1.200);
})();
```
